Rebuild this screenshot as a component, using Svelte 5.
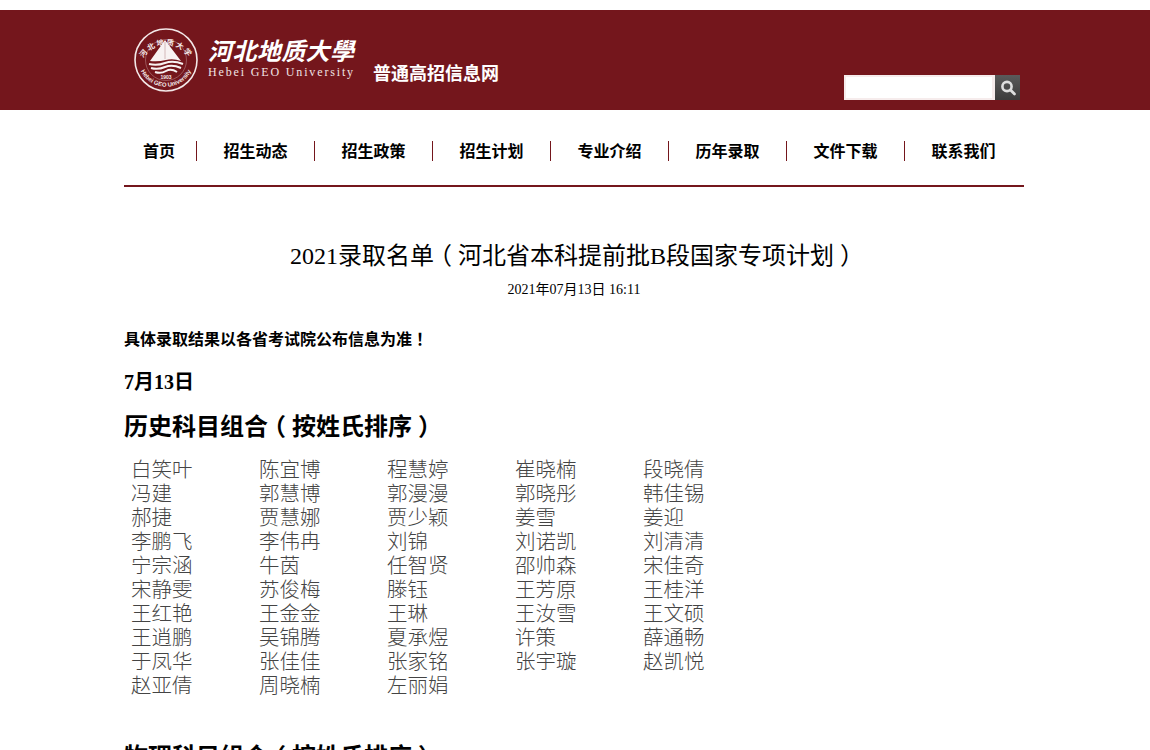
<script>
	const nav = ['首页', '招生动态', '招生政策', '招生计划', '专业介绍', '历年录取', '文件下载', '联系我们'];

	const names = [
		'白笑叶', '陈宜博', '程慧婷', '崔晓楠', '段晓倩',
		'冯建', '郭慧博', '郭漫漫', '郭晓彤', '韩佳锡',
		'郝捷', '贾慧娜', '贾少颖', '姜雪', '姜迎',
		'李鹏飞', '李伟冉', '刘锦', '刘诺凯', '刘清清',
		'宁宗涵', '牛茵', '任智贤', '邵帅森', '宋佳奇',
		'宋静雯', '苏俊梅', '滕钰', '王芳原', '王桂洋',
		'王红艳', '王金金', '王琳', '王汝雪', '王文硕',
		'王逍鹏', '吴锦腾', '夏承煜', '许策', '薛通畅',
		'于凤华', '张佳佳', '张家铭', '张宇璇', '赵凯悦',
		'赵亚倩', '周晓楠', '左丽娟'
	];
</script>

<header class="banner">
	<div class="banner-inner">
		<div class="brand">
			<svg class="seal" width="64" height="64" viewBox="0 0 64 64">
				<defs>
					<path id="ring-top" d="M 6.5 38 A 26 26 0 0 1 57.5 38" />
					<path id="ring-bottom" d="M 4.5 36 A 28 28 0 0 0 59.5 36" />
				</defs>
				<circle cx="32" cy="32" r="31" fill="none" stroke="#f3e8e8" stroke-width="1.6" />
				<circle cx="32" cy="32" r="20.5" fill="none" stroke="#f3e8e8" stroke-width="0.5" opacity="0.6" />
				<text class="seal-cn"><textPath href="#ring-top" startOffset="50%" text-anchor="middle">河北地质大学</textPath></text>
				<text class="seal-en"><textPath href="#ring-bottom" startOffset="50%" text-anchor="middle">Hebei GEO University</textPath></text>
				<path d="M31 12 L47 33 Q39 30 32 32 Q24 34 16 33 Z" fill="#f8f2f2" />
				<path d="M31 14 L31 31" stroke="#c9a9ab" stroke-width="0.8" />
				<path d="M15 36 Q23 38 31 35 T49 36 M17 40 Q24 42 31 39 T47 40 M21 44 Q27 46 32 43 T43 44" fill="none" stroke="#f8f2f2" stroke-width="2" />
				<text class="seal-year" x="32" y="51" text-anchor="middle">1903</text>
			</svg>
			<div class="wordmark">
				<div class="wordmark-cn">河北地质大學</div>
				<div class="wordmark-en">Hebei GEO University</div>
			</div>
			<div class="site-name">普通高招信息网</div>
		</div>
		<form class="search">
			<input type="text" aria-label="搜索" />
			<button type="button" aria-label="搜索">
				<svg width="18" height="18" viewBox="0 0 18 18">
					<circle cx="8" cy="7.5" r="4.6" fill="none" stroke="#dedede" stroke-width="2.6" />
					<path d="M11.5 11 L15.5 15" stroke="#dedede" stroke-width="2.8" stroke-linecap="round" />
				</svg>
			</button>
		</form>
	</div>
</header>

<nav class="nav">
	{#each nav as item}
		<a href="#top">{item}</a>
	{/each}
</nav>

<main class="article">
	<h1>2021录取名单<span class="mark">（</span>河北省本科提前批B段国家专项计划<span class="mark">）</span></h1>
	<p class="date">2021年07月13日 16:11</p>
	<p class="notice">具体录取结果以各省考试院公布信息为准<span class="mark">！</span></p>
	<h3>7月13日</h3>
	<h2>历史科目组合<span class="mark">（</span>按姓氏排序<span class="mark">）</span></h2>
	<div class="names">
		{#each names as name}
			<span>{name}</span>
		{/each}
	</div>
	<h2 class="next">物理科目组合<span class="mark">（</span>按姓氏排序<span class="mark">）</span></h2>
</main>

<style>
	:global(html), :global(body) {
		height: 750px;
		overflow: hidden;
	}

	:global(body) {
		background: #fff;
		font-family: "Liberation Serif", "Noto Sans CJK SC", serif;
		color: #000;
	}

	.banner {
		margin-top: 10px;
		height: 100px;
		background: #74161c;
	}

	.banner-inner {
		width: 900px;
		height: 100%;
		margin-left: 124px;
		display: flex;
		justify-content: space-between;
	}

	.brand {
		display: flex;
		align-items: flex-start;
		padding: 18px 0 0 10px;
		color: #fff;
	}

	.seal {
		flex: none;
	}

	.seal-cn {
		font: bold 7.5px "Noto Sans CJK SC", sans-serif;
		letter-spacing: 1.6px;
		fill: #f3e8e8;
	}

	.seal-en {
		font: bold 6px "Liberation Sans", sans-serif;
		fill: #f3e8e8;
	}

	.seal-year {
		font: bold 5px "Liberation Sans", sans-serif;
		fill: #f3e8e8;
	}

	.wordmark {
		margin: 9px 0 0 10px;
		width: 147px;
	}

	.wordmark-cn {
		font: italic bold 24px/26px "Noto Sans CJK SC", sans-serif;
		letter-spacing: 0.4px;
		white-space: nowrap;
	}

	.wordmark-en {
		margin-top: 2px;
		font: 12px/14px "Liberation Serif", serif;
		letter-spacing: 1.85px;
		color: #f0e4e4;
		white-space: nowrap;
	}

	.site-name {
		margin: 32px 0 0 18px;
		font: bold 18px/24px "Noto Sans CJK SC", sans-serif;
		white-space: nowrap;
	}

	.search {
		display: flex;
		margin: 65px 4px 0 0;
		height: 25px;
	}

	.search input {
		box-sizing: border-box;
		width: 151px;
		height: 25px;
		border: 2px solid #f6ecec;
		border-right-width: 3px;
		background: #fff;
		padding: 0;
		outline: none;
	}

	.search button {
		width: 25px;
		height: 25px;
		border: 0;
		padding: 0;
		display: flex;
		align-items: center;
		justify-content: center;
		background: linear-gradient(#5a5a5a, #3c3c3c);
	}

	.nav {
		box-sizing: border-box;
		width: 900px;
		height: 77px;
		margin-left: 124px;
		padding-top: 30px;
		border-bottom: 2px solid #74161c;
		display: flex;
		align-items: flex-start;
	}

	.nav a {
		height: 20px;
		width: 118px;
		margin-top: 1px;
		font: bold 16px/18px "Noto Sans CJK SC", sans-serif;
		color: #000;
		text-decoration: none;
		text-align: center;
		border-left: 1px solid #74161c;
		box-sizing: border-box;
	}

	.nav a:first-child {
		width: 72px;
		border-left: 0;
		text-align: right;
		padding-right: 21px;
	}

	.article {
		width: 900px;
		margin-left: 124px;
	}

	/* half-width glyph padded back to one em, so the mark sits centred */
	.mark {
		font-feature-settings: "halt";
		padding: 0 0.25em;
	}

	h1 {
		margin: 53px 0 0;
		font-weight: normal;
		font-size: 24px;
		line-height: 32px;
		text-align: center;
	}

	.date {
		margin: 9px 0 0;
		font-size: 14px;
		line-height: 18px;
		text-align: center;
	}

	.notice {
		margin: 29px 0 0;
		font-weight: bold;
		font-size: 16px;
		line-height: 24px;
	}

	h3 {
		margin: 18px 0 0;
		font-size: 20px;
		line-height: 24px;
	}

	h2 {
		margin: 17px 0 0;
		font-size: 24px;
		line-height: 32px;
	}

	.names {
		margin: 15px 0 0 7px;
		display: grid;
		grid-template-columns: repeat(5, 128px);
		font-size: 20.5px;
		line-height: 24px;
		color: #444;
	}

	.names span {
		font-weight: 300;
	}

	h2.next {
		margin-top: 43px;
	}
</style>
